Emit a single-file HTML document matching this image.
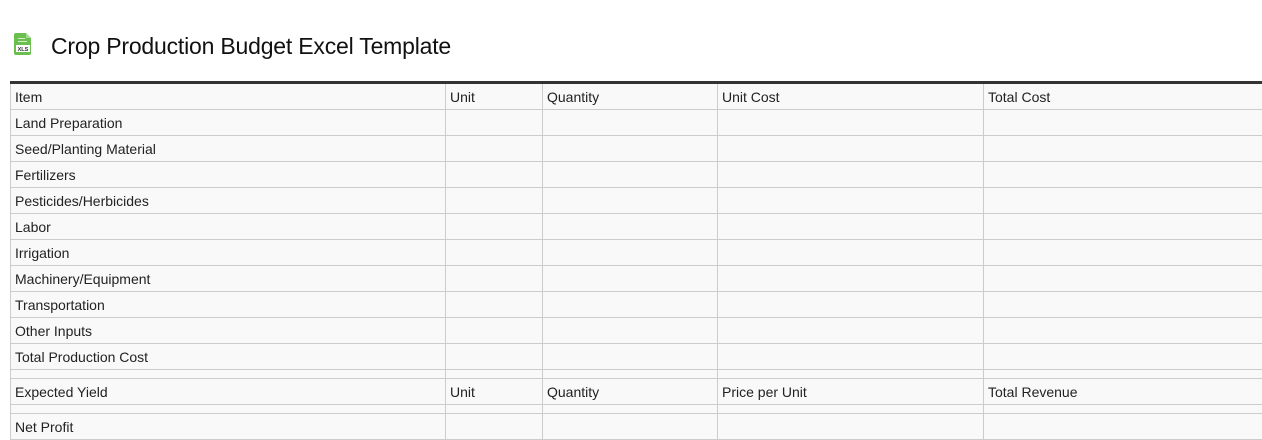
<!DOCTYPE html>
<html><head><meta charset="utf-8"><style>
*{margin:0;padding:0;box-sizing:border-box}
body{width:1262px;height:440px;background:#fff;font-family:"Liberation Sans",Arial,sans-serif;color:#222;overflow:hidden;position:relative}
h1{position:absolute;left:51px;top:33px;font-size:23px;font-weight:normal;color:#111;letter-spacing:-0.2px}
.icon{position:absolute;left:13px;top:33px}
table{position:absolute;left:10px;top:81px;width:1252px;border-collapse:collapse;border-top:3px solid #333;table-layout:fixed;font-size:14px}
td{border:1px solid #ccc;background:#f9f9f9;padding:0 4px;height:26px;white-space:nowrap;overflow:hidden}
tr.h td{height:27px}
tr.sp td{height:9px}
</style></head><body>
<svg class="icon" width="20" height="22" viewBox="0 0 20 22">
<path d="M1 2 Q1 0 3 0 L13 0 L18 5 L18 20 Q18 22 16 22 L3 22 Q1 22 1 20 Z" fill="#6bbf4e"/>
<path d="M13 0 L13 5 L18 5 Z" fill="#a6da92"/>
<rect x="5" y="5" width="7" height="1" fill="#cfeec3"/>
<rect x="5" y="8" width="9" height="1" fill="#cfeec3"/>
<rect x="3" y="12" width="14" height="7" fill="#fff"/>
<text x="10" y="17.8" font-size="5.5" font-family="Liberation Sans" font-weight="bold" text-anchor="middle" fill="#333">XLS</text>
</svg>
<h1>Crop Production Budget Excel Template</h1>
<table>
<colgroup><col style="width:435px"><col style="width:97px"><col style="width:175px"><col style="width:266px"><col style="width:279px"></colgroup>
<tr class="h"><td>Item</td><td>Unit</td><td>Quantity</td><td>Unit Cost</td><td>Total Cost</td></tr>
<tr><td>Land Preparation</td><td></td><td></td><td></td><td></td></tr>
<tr><td>Seed/Planting Material</td><td></td><td></td><td></td><td></td></tr>
<tr><td>Fertilizers</td><td></td><td></td><td></td><td></td></tr>
<tr><td>Pesticides/Herbicides</td><td></td><td></td><td></td><td></td></tr>
<tr><td>Labor</td><td></td><td></td><td></td><td></td></tr>
<tr><td>Irrigation</td><td></td><td></td><td></td><td></td></tr>
<tr><td>Machinery/Equipment</td><td></td><td></td><td></td><td></td></tr>
<tr><td>Transportation</td><td></td><td></td><td></td><td></td></tr>
<tr><td>Other Inputs</td><td></td><td></td><td></td><td></td></tr>
<tr><td>Total Production Cost</td><td></td><td></td><td></td><td></td></tr>
<tr class="sp"><td></td><td></td><td></td><td></td><td></td></tr>
<tr><td>Expected Yield</td><td>Unit</td><td>Quantity</td><td>Price per Unit</td><td>Total Revenue</td></tr>
<tr class="sp"><td></td><td></td><td></td><td></td><td></td></tr>
<tr><td>Net Profit</td><td></td><td></td><td></td><td></td></tr>
</table>
</body></html>
